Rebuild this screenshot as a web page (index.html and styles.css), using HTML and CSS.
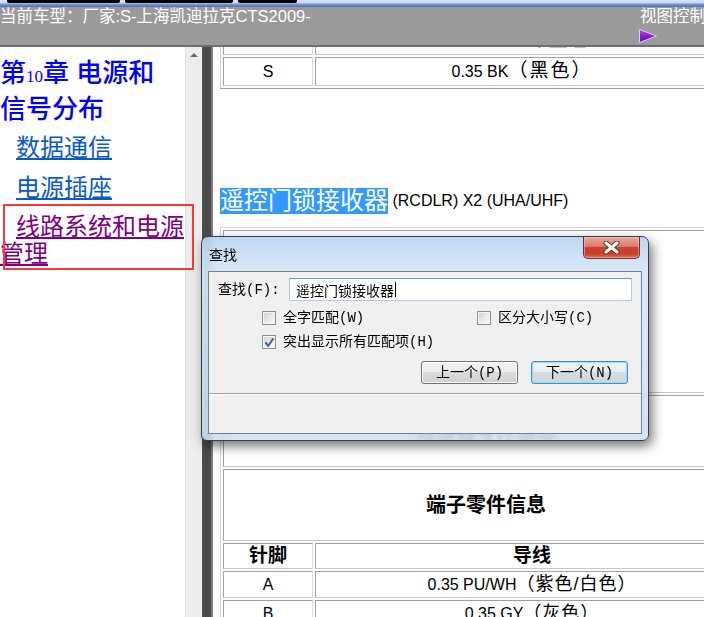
FILE: index.html
```html
<!DOCTYPE html>
<html lang="zh-CN">
<head>
    <meta charset="UTF-8">
    <title>电路信息 - 遥控门锁接收器</title>
    <link rel="stylesheet" href="styles.css">
</head>
<body>
    <div class="taskbar">
        <span class="task"></span>
        <span class="task task-2"></span>
        <span class="task task-3"></span>
    </div>

    <div class="topbar">
        <div class="car">当前车型：厂家:S-上海凯迪拉克CTS2009-</div>
        <div class="view">
            <div>视图控制</div>
            <svg class="view-arrow" width="18" height="14" viewBox="0 0 18 14">
                <defs>
                    <linearGradient id="arrowFill" x1="0" y1="0" x2="0" y2="1">
                        <stop offset="0" stop-color="#b040f0"/>
                        <stop offset="1" stop-color="#6a00b0"/>
                    </linearGradient>
                </defs>
                <polygon points="0.5,0.5 17.5,7 0.5,13.5" fill="url(#arrowFill)" stroke="#e8c8ff" stroke-width="1"/>
            </svg>
        </div>
    </div>

    <div class="main">
        <!-- 左侧目录 -->
        <div class="nav">
            <h2 class="chapter">第<span class="num">10</span>章 电源和信号分布</h2>
            <p><a class="link" href="#">数据通信</a></p>
            <p><a class="link" href="#">电源插座</a></p>
            <p><a class="link visited" href="#">线路系统和电源管理</a></p>
        </div>
        <div class="scrollbar"><span class="arrow-up"></span></div>
        <div class="splitter"></div>

        <!-- 右侧正文 -->
        <div class="doc">
            <div class="doc-inner">
                <table class="grid t1">
                    <colgroup><col class="col-pin"><col></colgroup>
                    <tr><td>R</td><td>0.35 D-BU<span class="cn">（深蓝色）</span></td></tr>
                    <tr><td>S</td><td>0.35 BK<span class="cn">（黑色）</span></td></tr>
                </table>

                <p class="part"><span class="hit">遥控门锁接收器</span> (RCDLR) X2 (UHA/UHF)</p>

                <table class="grid t2">
                    <colgroup><col class="col-pin"><col></colgroup>
                    <tr><td colspan="2" class="blank"></td></tr>
                    <tr><td colspan="2" class="title">连接器零件信息</td></tr>
                    <tr><td colspan="2" class="title">端子零件信息</td></tr>
                    <tr><th>针脚</th><th>导线</th></tr>
                    <tr><td>A</td><td>0.35 PU/WH<span class="cn">（紫色/白色）</span></td></tr>
                    <tr><td>B</td><td>0.35 GY<span class="cn">（灰色）</span></td></tr>
                </table>
            </div>
        </div>
    </div>

    <div class="mark"></div>

    <!-- 查找对话框 -->
    <div class="find">
        <div class="find-title">查找</div>
        <div class="close-btn">
            <svg width="17" height="13" viewBox="0 0 17 13">
                <path d="M3 2 L14 11 M14 2 L3 11" stroke="#5a3a36" stroke-width="5" stroke-linecap="round"/>
                <path d="M3 2 L14 11 M14 2 L3 11" stroke="#ffffff" stroke-width="3" stroke-linecap="round"/>
            </svg>
        </div>
        <div class="client">
            <div class="client-body">
                <div class="find-row">
                    <label class="find-label">查找(F):</label>
                    <div class="textbox">遥控门锁接收器<span class="caret"></span></div>
                </div>
                <div class="options">
                    <div class="check"><span class="box"></span>全字匹配(W)</div>
                    <div class="check"><span class="box"></span>区分大小写(C)</div>
                    <div class="check">
                        <span class="box">
                            <svg width="11" height="11" viewBox="0 0 11 11">
                                <path d="M1.5 5.5 L4.2 8.8 L9.5 1.2" fill="none" stroke="#4a5f94" stroke-width="2"/>
                            </svg>
                        </span>突出显示所有匹配项(H)
                    </div>
                </div>
                <div class="buttons">
                    <button class="btn">上一个(P)</button>
                    <button class="btn default">下一个(N)</button>
                </div>
            </div>
            <div class="status"></div>
        </div>
    </div>
</body>
</html>
```

FILE: styles.css
```css
* {
    box-sizing: border-box;
    margin: 0;
    padding: 0;
}

html, body {
    width: 704px;
    height: 617px;
    overflow: hidden;
}

body {
    position: relative;
    font-family: "Liberation Sans", "Noto Sans CJK SC", sans-serif;
    background: #fff;
    color: #000;
}

/* 顶部任务栏 */
.taskbar {
    height: 7px;
    display: flex;
    gap: 5px;
    padding-left: 7px;
    background: linear-gradient(180deg, #d9e4f5 0, #c8d6ef 3px, #7a98d6 4px, #4a6fc2 7px);
}

.task {
    width: 113px;
    height: 3px;
    background: #000;
    border-radius: 0 0 2px 2px;
}

.task-2 { width: 108px; }
.task-3 { width: 59px; }

.topbar {
    height: 40px;
    display: flex;
    background: #9a9a9a;
    border-bottom: 2px solid #6e6e6e;
    color: #fff;
    font-size: 16.5px;
    line-height: 18px;
    white-space: nowrap;
}

.view {
    margin-left: auto;
    width: 64px;
}

.view-arrow {
    display: block;
    margin-top: 4px;
    margin-left: -1px;
}

.main {
    display: flex;
    height: 570px;
}

/* 目录 */
.nav {
    width: 185px;
    flex-shrink: 0;
    padding-top: 10px;
}

.chapter {
    width: 175px;
    font-size: 26px;
    line-height: 32px;
    font-weight: 500;
    color: #0000ff;
}

.chapter .num {
    font-family: "Liberation Serif", serif;
    font-size: 17px;
}

.nav p {
    font-size: 24px;
    line-height: 27px;
    text-indent: 16px;
    margin-top: 13px;
}

.nav p:first-of-type {
    margin-top: 9px;
}

.nav p:last-of-type {
    margin-top: 12px;
}

.link {
    color: #0a58d0;
    text-decoration: underline;
}

.link.visited {
    color: #800080;
}

.scrollbar {
    width: 17px;
    flex-shrink: 0;
    background: #ededed;
    border-left: 1px solid #e2e2e2;
    border-right: 1px solid #f6f6f6;
    padding-top: 6px;
}

.arrow-up {
    display: block;
    width: 0;
    height: 0;
    margin: 0 auto;
    border-left: 4px solid transparent;
    border-right: 4px solid transparent;
    border-bottom: 4px solid #6a6a6a;
}

.splitter {
    width: 11px;
    flex-shrink: 0;
    background: linear-gradient(90deg, #4b4b4b 0, #4b4b4b 9px, #7c7c7c 9px);
}

/* 正文 */
.doc {
    flex: 1;
    overflow: hidden;
    padding-left: 7px;
}

.doc-inner {
    width: max-content;
    margin-top: -24px;
}

.grid {
    border-collapse: separate;
    border-spacing: 2px;
    border: 1px solid;
    border-color: #d4d4d4 #a0a0a0 #a0a0a0 #d4d4d4;
    font-size: 16px;
    table-layout: fixed;
}

.grid .col-pin {
    width: 90px;
}

.grid td, .grid th {
    border: 1px solid;
    border-color: #a0a0a0 #dcdcdc #c8c8c8 #a0a0a0;
    text-align: center;
    line-height: 26px;
    height: 28px;
    padding: 0;
    white-space: nowrap;
}

.t1 { width: 512px; }
.t2 { width: 532px; }

.cn {
    font-size: 18px;
    letter-spacing: 1px;
}

.t1 .cn {
    font-size: 19px;
    letter-spacing: 2px;
}

.t2 th {
    font-size: 19px;
    font-weight: bold;
    height: 26px;
    line-height: 24px;
}

.t2 td {
    height: 26px;
    line-height: 24px;
}

.t2 .blank { height: 163px; }

.t2 .title {
    height: 72px;
    font-size: 20px;
    font-weight: bold;
}

.part {
    margin-top: 99px;
    margin-bottom: 13px;
    font-size: 16px;
    line-height: 26px;
    height: 26px;
}

.hit {
    display: inline-block;
    font-size: 24px;
    line-height: 26px;
    height: 26px;
    vertical-align: top;
    background: #3399ff;
    color: #fff;
}

/* 标注框 */
.mark {
    position: absolute;
    left: 3px;
    top: 204px;
    width: 191px;
    height: 66px;
    border: 2px solid #ff3636;
}

/* 查找对话框 */
.find {
    position: absolute;
    left: 201px;
    top: 236px;
    width: 448px;
    height: 205px;
    padding: 0 6px 6px;
    border: 1px solid #3a3f45;
    border-radius: 7px 7px 6px 6px;
    background: linear-gradient(180deg, rgba(184, 212, 243, 0.93) 0, rgba(215, 231, 248, 0.93) 34px, rgba(206, 224, 245, 0.9) 100%);
    backdrop-filter: blur(2px);
    box-shadow: 3px 5px 12px rgba(0, 0, 0, 0.55);
    font-family: "Liberation Mono", "Noto Sans CJK SC", monospace;
    font-size: 14px;
}

.find-title {
    height: 34px;
    line-height: 34px;
    padding-left: 1px;
    font-family: "Noto Sans CJK SC", sans-serif;
}

.close-btn {
    position: absolute;
    top: 0;
    right: 8px;
    width: 57px;
    height: 22px;
    display: flex;
    align-items: center;
    justify-content: center;
    border: 1px solid #6e3028;
    border-top: none;
    border-radius: 0 0 5px 5px;
    background: linear-gradient(180deg, #eaa89c 0, #dc7a6c 45%, #c9422e 50%, #c6402a 80%, #dd6f4f 100%);
    box-shadow: inset 0 0 0 1px rgba(255, 220, 210, 0.45);
}

.close-btn svg {
    display: block;
}

.client {
    height: 163px;
    border: 1px solid #6f8296;
    background: #f0f0f0;
    display: flex;
    flex-direction: column;
}

.client-body {
    padding: 6px 9px 9px;
}

.find-row {
    display: flex;
    align-items: center;
    height: 23px;
}

.find-label {
    width: 71px;
    line-height: 20px;
}

.textbox {
    flex: 1;
    height: 23px;
    line-height: 20px;
    padding: 0 6px;
    background: #fff;
    border: 1px solid #a9cdee;
    border-top-color: #5f9bd0;
    display: flex;
    align-items: center;
    font-family: "Noto Sans CJK SC", sans-serif;
}

.caret {
    width: 1px;
    height: 15px;
    background: #000;
    margin-left: 1px;
}

.options {
    display: grid;
    grid-template-columns: 215px auto;
    grid-auto-rows: 24px;
    margin: 5px 0 0 44px;
}

.check {
    display: flex;
    align-items: center;
    gap: 7px;
    line-height: 20px;
}

.box {
    width: 14px;
    height: 14px;
    flex-shrink: 0;
    border: 1px solid #8e8f8f;
    background: linear-gradient(135deg, #cfcfcf 0, #ececec 60%, #fafafa 100%);
    box-shadow: inset 0 0 0 1px #f6f6f6;
    display: flex;
    align-items: center;
    justify-content: center;
}

.box svg {
    display: block;
}

.buttons {
    display: flex;
    justify-content: flex-end;
    gap: 13px;
    margin: 7px 4px 0 0;
}

.btn {
    width: 97px;
    height: 23px;
    font: inherit;
    line-height: 20px;
    color: #000;
    border: 1px solid #707070;
    border-radius: 3px;
    background: linear-gradient(180deg, #f2f2f2 0, #ebebeb 50%, #dddddd 50%, #cfcfcf 100%);
    box-shadow: inset 0 0 0 1px #fcfcfc;
}

.btn.default {
    border-color: #3c8fd0;
    background: linear-gradient(180deg, #eef4f8 0, #e5ecf1 50%, #d5dde3 50%, #cad5dc 100%);
    box-shadow: inset 0 0 0 1px #9cdcfb;
}

.status {
    flex: 1;
    border-top: 1px solid #a0a0a0;
    box-shadow: inset 0 1px 0 #fff;
}
```
